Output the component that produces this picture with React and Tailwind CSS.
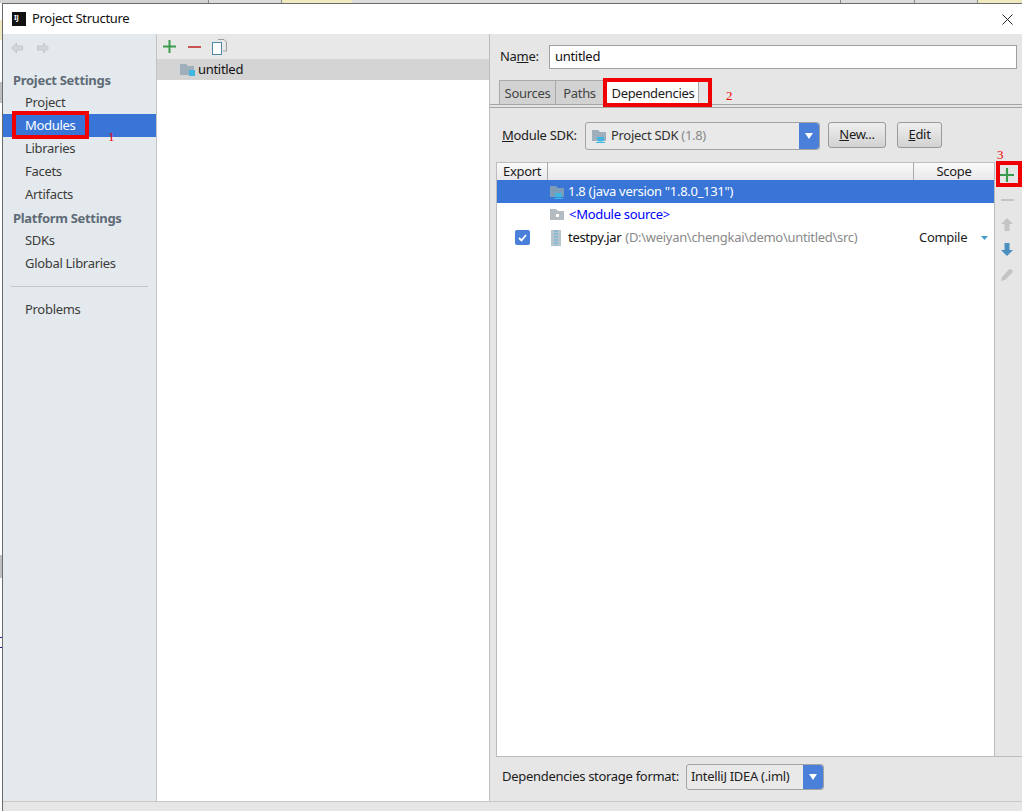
import React from 'react'

const font = { fontFamily: '"Noto Sans", "Open Sans", sans-serif' }
const noteFont = { fontFamily: '"Liberation Serif", serif' }

function FolderIcon({ color = '#9fb0bc', badge }) {
  return (
    <svg width="15" height="14" viewBox="0 0 15 14" className="shrink-0">
      <path d="M0 1h6l2 2h6v9H0z" fill={color} />
      {badge === 'square' && <rect x="9" y="7" width="6" height="6" fill="#40b6e0" />}
      {badge === 'cup' && <path d="M5 8h7v2.500a2 2 0 0 1-2 2H7a2 2 0 0 1-2-2zM4 13h9v1H4z" fill="#40b6e0" />}
      {badge === 'dot' && <rect x="6" y="6" width="3" height="3" fill="#fff" />}
    </svg>
  )
}

function Arrow({ flip }) {
  return (
    <svg width="14" height="12" viewBox="0 0 14 12" className={flip ? 'rotate-180' : ''}>
      <path d="M6.500 1 1.500 6l5 5V8h6V4h-6z" fill="#d3d6d8" stroke="#c4c7c9" />
    </svg>
  )
}

function ComboArrow() {
  return (
    <div className="w-[20px] flex items-center justify-center self-stretch bg-[#4a80d9] rounded-r-[3px]">
      <svg width="8" height="6" viewBox="0 0 8 6"><path d="M0 0h8L4 6z" fill="#fff" /></svg>
    </div>
  )
}

function NavItem({ label, selected }) {
  return (
    <div className={`h-[23px] pl-[22px] flex items-center text-[13px] ${selected ? 'bg-[#3875d7] text-white' : 'text-[#3c3c3c]'}`}>
      {label}
    </div>
  )
}

function NavHeader({ label }) {
  return <div className="h-[23px] pl-[10px] pt-[2px] flex items-center text-[13px] font-bold text-[#5f6b76]">{label}</div>
}

function Plus({ size = 13 }) {
  return (
    <svg width={size} height={size} viewBox="0 0 13 13"><path d="M5.500 0h2v5.500H13v2H7.500V13h-2V7.500H0v-2h5.500z" fill="#3a9b4c" /></svg>
  )
}

function Tab({ label, className }) {
  return (
    <div className={`h-[24px] pt-[2px] flex items-center justify-center text-[13px] border-r border-t border-[#a9a9a9] ${className}`}>
      {label}
    </div>
  )
}

function SideButton({ children }) {
  return <div className="h-[25px] flex items-center justify-center pr-[3px]">{children}</div>
}

function Button({ children, className }) {
  return (
    <div className={`h-[26px] self-start flex items-center justify-center rounded-[3px] border border-[#9a9a9a] bg-gradient-to-b from-[#efefef] to-[#d2d2d2] text-[13px] text-[#1c1c1c] ${className}`}>
      <span>{children}</span>
    </div>
  )
}

export default function App() {
  return (
    <div style={font} className="relative w-[1022px] h-[811px] overflow-hidden bg-white flex flex-col tracking-[-0.3px]">
      {/* bit of the window behind the dialog */}
      <div className="h-[3px] flex bg-[#dcdcdc] shrink-0">
        <div className="w-[208px] bg-[#d2d2d2]" />
        <div className="w-[73px] border-l border-[#8a8a8a]" />
        <div className="w-[71px] bg-[#efeac0] border-l border-[#8a8a8a]" />
        <div className="w-[488px]" />
        <div className="w-[74px] border-l border-[#8a8a8a]" />
        <div className="w-[63px] border-l border-[#8a8a8a]" />
        <div className="flex-1 bg-[#efeac0] border-l border-[#8a8a8a]" />
      </div>

      <div className="flex-1 ml-[2px] border-l border-t border-[#6a6a6a] bg-[#e6e6e6] flex flex-col min-h-0">
        <div className="h-[30px] bg-white flex items-center shrink-0 pl-[9px] pr-[9px]">
          <div className="w-[14px] h-[14px] bg-[#111] text-white text-[7px] font-bold leading-[9px] pl-[2px] pt-[1px]">IJ</div>
          <div className="ml-[6px] text-[13px] text-[#111]">Project Structure</div>
          <svg className="ml-auto" width="11" height="11" viewBox="0 0 11 11"><path d="M.5.5l10 10M10.500.5l-10 10" stroke="#222" strokeWidth="1" /></svg>
        </div>

        <div className="flex-1 flex min-h-0">
          {/* sidebar */}
          <div className="w-[154px] bg-[#e4e9ed] border-r border-[#bfc3c6] shrink-0">
            <div className="h-[28px] flex items-center gap-[12px] pl-[7px]">
              <Arrow />
              <Arrow flip />
            </div>
            <div className="mt-[6px]">
              <NavHeader label="Project Settings" />
              <NavItem label="Project" />
              <NavItem label="Modules" selected />
              <NavItem label="Libraries" />
              <NavItem label="Facets" />
              <NavItem label="Artifacts" />
              <NavHeader label="Platform Settings" />
              <NavItem label="SDKs" />
              <NavItem label="Global Libraries" />
              <div className="h-[1px] bg-[#c4c7c9] mx-[8px] mt-[11px] mb-[11px]" />
              <NavItem label="Problems" />
            </div>
          </div>

          {/* module tree */}
          <div className="w-[333px] bg-white border-r border-[#bdbdbd] shrink-0">
            <div className="h-[25px] bg-[#e8e8e8] flex items-center pl-[6px]">
              <Plus />
              <svg className="ml-[12px]" width="13" height="2" viewBox="0 0 13 2"><rect width="13" height="2" fill="#c75450" /></svg>
              <svg className="ml-[11px]" width="15" height="16" viewBox="0 0 15 16">
                <path d="M6 .5h6l2.500 2.500v9H11" fill="#e8e8e8" stroke="#9aa0a3" />
                <rect x=".5" y="3.500" width="9" height="12" fill="#fff" stroke="#4d88a8" />
              </svg>
            </div>
            <div className="h-[21px] bg-[#d4d4d4] flex items-center pl-[23px] gap-[3px] text-[13px] text-[#111]">
              <FolderIcon badge="square" />
              <span>untitled</span>
            </div>
          </div>

          {/* module details */}
          <div className="flex-1 flex flex-col min-w-0">
            <div className="h-[46px] flex items-center pl-[10px] pr-[5px] shrink-0">
              <span className="w-[49px] text-[13px] text-[#1c1c1c]">Na<u>m</u>e:</span>
              <div className="flex-1 h-[24px] bg-white border border-[#a0a0a0] flex items-center pl-[5px] text-[13px] text-[#111]">untitled</div>
            </div>

            <div className="flex pl-[9px] shrink-0">
              <Tab label="Sources" className="w-[57px] border-l bg-[#d2d2d2] text-[#444]" />
              <Tab label="Paths" className="w-[48px] bg-[#d2d2d2] text-[#444]" />
              <Tab label="Dependencies" className="w-[95px] pl-[4px] bg-white text-[#1c1c1c]" />
            </div>
            <div className="h-[4px] border-t border-b border-[#a3a3a3] shrink-0" />

            <div className="mt-[14px] flex items-center pl-[12px] h-[28px] shrink-0">
              <span className="w-[83px] text-[13px] text-[#1c1c1c]"><u>M</u>odule SDK:</span>
              <div className="w-[235px] h-[28px] flex items-center border border-[#a3a3a3] rounded-[3px] bg-[#e9e9e9]">
                <div className="flex-1 flex items-center gap-[4px] pl-[6px] text-[13px] text-[#333]">
                  <FolderIcon badge="cup" />
                  <span>Project SDK <span className="text-[#8a8a8a]">(1.8)</span></span>
                </div>
                <ComboArrow />
              </div>
              <Button className="ml-[8px] w-[58px]"><u>N</u>ew...</Button>
              <Button className="ml-[11px] w-[45px]"><u>E</u>dit</Button>
            </div>

            <div className="mt-[12px] flex-1 flex min-h-0 ml-[6px]">
              <div className="w-[499px] bg-white border border-[#bcbcbc] flex flex-col shrink-0">
                <div className="h-[17px] flex bg-gradient-to-b from-[#fafafa] to-[#e9e9e9] text-[13px] text-[#1c1c1c] shrink-0">
                  <div className="w-[51px] pl-[6px] flex items-center border-r border-[#a9a9a9]">Export</div>
                  <div className="w-[366px] border-r border-[#a9a9a9]" />
                  <div className="flex-1 flex items-center justify-center">Scope</div>
                </div>
                <div className="h-[23px] bg-[#3875d7] flex items-center pl-[53px] gap-[3px] text-[13px] text-white">
                  <FolderIcon color="#7d9cb8" badge="cup" />
                  <span>1.8 (java version "1.8.0_131")</span>
                </div>
                <div className="h-[23px] flex items-center pl-[53px] gap-[4px] text-[13px] text-[#0000ff]">
                  <FolderIcon color="#b4bcc2" badge="dot" />
                  <span>&lt;Module source&gt;</span>
                </div>
                <div className="h-[23px] flex items-center text-[13px]">
                  <div className="ml-[18px] w-[15px] h-[15px] rounded-[2px] bg-[#4a80d9] flex items-center justify-center">
                    <svg width="9" height="8" viewBox="0 0 9 8"><path d="M1 4l2.500 2.500L8 1" stroke="#fff" strokeWidth="1.800" fill="none" /></svg>
                  </div>
                  <svg className="ml-[21px]" width="10" height="16" viewBox="0 0 10 16">
                    <rect width="10" height="16" fill="#b6c4cc" />
                    <path d="M4 0v16M6 0v16" stroke="#7db8d8" strokeWidth="1.500" strokeDasharray="2 1" />
                  </svg>
                  <span className="ml-[7px] text-[#111]">testpy.jar</span>
                  <span className="ml-[4px] flex-1 text-[#8a8a8a]">(D:\weiyan\chengkai\demo\untitled\src)</span>
                  <div className="w-[80px] pl-[5px] flex items-center">
                    <span className="w-[62px] text-[#1c1c1c]">Compile</span>
                    <svg width="7" height="4" viewBox="0 0 7 4"><path d="M0 0h7L3.500 4z" fill="#4a9cc8" /></svg>
                  </div>
                </div>
              </div>

              <div className="flex-1 border-b border-[#bcbcbc] flex flex-col">
                <SideButton><Plus size={14} /></SideButton>
                <SideButton><svg width="13" height="2" viewBox="0 0 13 2"><rect width="13" height="2" fill="#c4c4c4" /></svg></SideButton>
                <SideButton>
                  <svg width="12" height="13" viewBox="0 0 12 13"><path d="M6 0l6 6H8.500v7h-5V6H0z" fill="#c4c4c4" /></svg>
                </SideButton>
                <SideButton>
                  <svg width="12" height="13" viewBox="0 0 12 13"><path d="M6 13L0 7h3.500V0h5v7H12z" fill="#4a8fc0" /></svg>
                </SideButton>
                <SideButton>
                  <svg width="12" height="12" viewBox="0 0 12 12"><path d="M0 12l1-4 6.500-7a2 2 0 0 1 3.500 3L4 11z" fill="#c4c4c4" /></svg>
                </SideButton>
              </div>
            </div>

            <div className="h-[44px] pb-[4px] flex items-center pl-[12px] shrink-0">
              <span className="w-[184px] whitespace-nowrap text-[13px] text-[#1c1c1c]">Dependencies storage format:</span>
              <div className="w-[138px] h-[26px] flex items-center border border-[#a3a3a3] rounded-[3px] bg-[#e9e9e9]">
                <div className="flex-1 pl-[4px] text-[13px] text-[#222]">IntelliJ IDEA (.iml)</div>
                <ComboArrow />
              </div>
            </div>
          </div>
        </div>

        <div className="h-[10px] border-t border-[#c8c8c8] bg-[#e6e6e6] shrink-0" />
      </div>

      {/* scraps of the window behind, left of the dialog */}
      <div className="absolute left-0 top-[20px] w-[2px] h-[20px] bg-[#efeac0]" />
      <div className="absolute left-0 top-[82px] w-[2px] h-[21px] bg-[#c0c0c0]" />
      <div className="absolute left-0 top-[555px] w-[2px] h-[23px] bg-[#c0c0c0]" />
      <div className="absolute left-0 top-[637px] w-[2px] h-[11px] border-t border-b border-[#22228a]" />

      {/* red annotations drawn over the screenshot */}
      <div className="absolute left-[12px] top-[111px] w-[77px] h-[28px] border-[4px] border-[#f00000]" />
      <div className="absolute left-[108px] top-[130px] text-[13px] leading-[14px] text-[#f00000]" style={noteFont}>1</div>
      <div className="absolute left-[603px] top-[78px] w-[109px] h-[29px] border-[4px] border-[#f00000]" />
      <div className="absolute left-[726px] top-[89px] text-[13px] leading-[14px] text-[#f00000]" style={noteFont}>2</div>
      <div className="absolute left-[996px] top-[161px] w-[26px] h-[26px] border-[4px] border-[#f00000]" />
      <div className="absolute left-[997px] top-[148px] text-[13px] leading-[14px] text-[#f00000]" style={noteFont}>3</div>
    </div>
  )
}
